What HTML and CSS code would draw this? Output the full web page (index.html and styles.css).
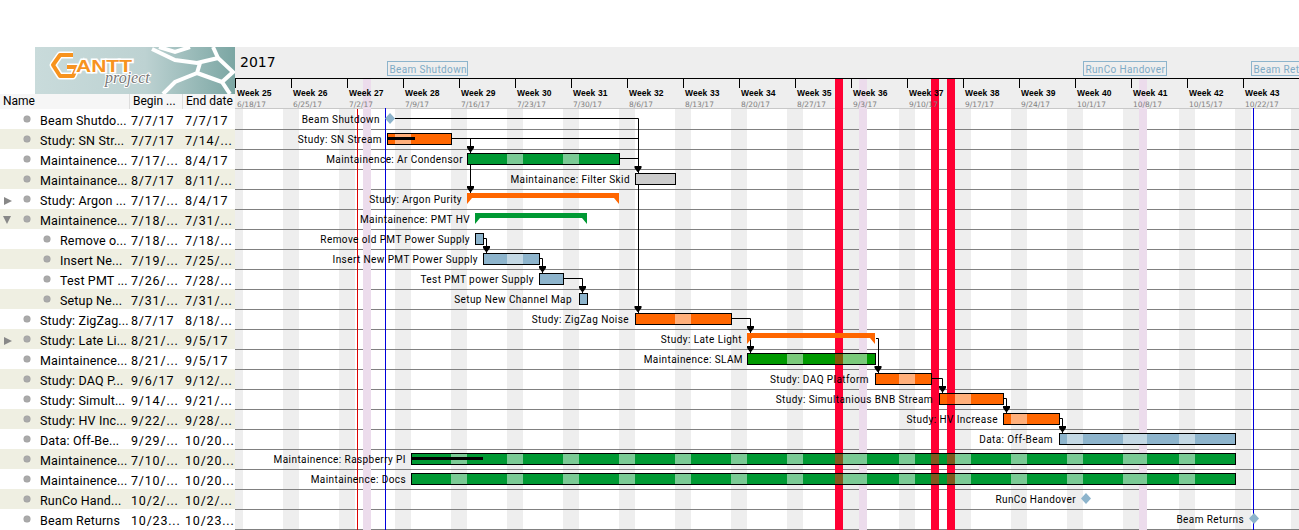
FILE: index.html
```html
<!DOCTYPE html>
<html lang="en">
<head>
    <meta charset="UTF-8">
    <title>GanttProject</title>
    <link rel="stylesheet" href="styles.css">
</head>
<body>
<div class="app">
    <div class="side">
        <div class="logo-wrap">
            <svg class="logo" viewBox="0 0 200 47" width="200" height="47" role="img" aria-label="Gantt project">
                <defs>
                    <linearGradient id="logoBg" x1="0" x2="1" y1="0" y2="0">
                        <stop offset="0" stop-color="#c9dbdb"/>
                        <stop offset="0.55" stop-color="#bdd2d2"/>
                        <stop offset="1" stop-color="#7ba6a3"/>
                    </linearGradient>
                </defs>
                <rect width="200" height="47" fill="url(#logoBg)"/>
                <g class="logo-cells">
                    <polyline points="117,2 140,13 162,16 183,11 178,0"/>
                    <polyline points="128,47 140,35 162,26 165,16"/>
                    <polyline points="162,26 187,35 195,47"/>
                    <polyline points="183,11 198,25 187,35"/>
                    <polyline points="124,0 140,5 155,0"/>
                </g>
                <polyline class="logo-g-edge" points="38,8 25,8 18,18 25,29 38,29 42,20 32,20"/>
                <polyline class="logo-g" points="38,8 25,8 18,18 25,29 38,29 42,20 32,20"/>
                <text class="logo-antt" x="41" y="25" textLength="56" lengthAdjust="spacingAndGlyphs">ANTT</text>
                <text class="logo-project" x="70" y="36">project</text>
            </svg>
        </div>
        <div class="thead">
            <div class="th th-name">Name</div>
            <div class="th th-begin">Begin ...</div>
            <div class="th th-end">End date</div>
        </div>
        <div class="tbody">
            <div class="row"><div class="name"><i class="toggle"></i><i class="dot"></i>Beam Shutdo...</div><div class="begin">7/7/17</div><div class="end">7/7/17</div></div>
            <div class="row"><div class="name"><i class="toggle"></i><i class="dot"></i>Study: SN Str...</div><div class="begin">7/7/17</div><div class="end">7/14/...</div></div>
            <div class="row"><div class="name"><i class="toggle"></i><i class="dot"></i>Maintainence...</div><div class="begin">7/17/...</div><div class="end">8/4/17</div></div>
            <div class="row"><div class="name"><i class="toggle"></i><i class="dot"></i>Maintainance...</div><div class="begin">8/7/17</div><div class="end">8/11/...</div></div>
            <div class="row"><div class="name"><i class="toggle closed"></i><i class="dot"></i>Study: Argon ...</div><div class="begin">7/17/...</div><div class="end">8/4/17</div></div>
            <div class="row"><div class="name"><i class="toggle open"></i><i class="dot"></i>Maintainence...</div><div class="begin">7/18/...</div><div class="end">7/31/...</div></div>
            <div class="row"><div class="name sub"><i class="toggle"></i><i class="dot"></i>Remove o...</div><div class="begin">7/18/...</div><div class="end">7/18/...</div></div>
            <div class="row"><div class="name sub"><i class="toggle"></i><i class="dot"></i>Insert Ne...</div><div class="begin">7/19/...</div><div class="end">7/25/...</div></div>
            <div class="row"><div class="name sub"><i class="toggle"></i><i class="dot"></i>Test PMT ...</div><div class="begin">7/26/...</div><div class="end">7/28/...</div></div>
            <div class="row"><div class="name sub"><i class="toggle"></i><i class="dot"></i>Setup Ne...</div><div class="begin">7/31/...</div><div class="end">7/31/...</div></div>
            <div class="row"><div class="name"><i class="toggle"></i><i class="dot"></i>Study: ZigZag...</div><div class="begin">8/7/17</div><div class="end">8/18/...</div></div>
            <div class="row"><div class="name"><i class="toggle closed"></i><i class="dot"></i>Study: Late Li...</div><div class="begin">8/21/...</div><div class="end">9/5/17</div></div>
            <div class="row"><div class="name"><i class="toggle"></i><i class="dot"></i>Maintainence...</div><div class="begin">8/21/...</div><div class="end">9/5/17</div></div>
            <div class="row"><div class="name"><i class="toggle"></i><i class="dot"></i>Study: DAQ P...</div><div class="begin">9/6/17</div><div class="end">9/12/...</div></div>
            <div class="row"><div class="name"><i class="toggle"></i><i class="dot"></i>Study: Simult...</div><div class="begin">9/14/...</div><div class="end">9/21/...</div></div>
            <div class="row"><div class="name"><i class="toggle"></i><i class="dot"></i>Study: HV Inc...</div><div class="begin">9/22/...</div><div class="end">9/28/...</div></div>
            <div class="row"><div class="name"><i class="toggle"></i><i class="dot"></i>Data: Off-Be...</div><div class="begin">9/29/...</div><div class="end">10/20...</div></div>
            <div class="row"><div class="name"><i class="toggle"></i><i class="dot"></i>Maintainence...</div><div class="begin">7/10/...</div><div class="end">10/20...</div></div>
            <div class="row"><div class="name"><i class="toggle"></i><i class="dot"></i>Maintainence...</div><div class="begin">7/10/...</div><div class="end">10/20...</div></div>
            <div class="row"><div class="name"><i class="toggle"></i><i class="dot"></i>RunCo Hand...</div><div class="begin">10/2/...</div><div class="end">10/2/...</div></div>
            <div class="row"><div class="name"><i class="toggle"></i><i class="dot"></i>Beam Returns</div><div class="begin">10/23...</div><div class="end">10/23...</div></div>
        </div>
    </div>

    <!-- chart uses page coordinates, see viewBox -->
    <svg class="chart" viewBox="235 47 1064 483" width="1064" height="483">
        <defs>
            <pattern id="rowLines" x="0" y="129" width="20" height="20" patternUnits="userSpaceOnUse">
                <rect width="20" height="1" class="row-line"/>
            </pattern>
            <g id="weekends">
                <rect x="227" y="109" width="16" height="421"/>
                <rect x="283" y="109" width="16" height="421"/>
                <rect x="339" y="109" width="16" height="421"/>
                <rect x="395" y="109" width="16" height="421"/>
                <rect x="451" y="109" width="16" height="421"/>
                <rect x="507" y="109" width="16" height="421"/>
                <rect x="563" y="109" width="16" height="421"/>
                <rect x="619" y="109" width="16" height="421"/>
                <rect x="675" y="109" width="16" height="421"/>
                <rect x="731" y="109" width="16" height="421"/>
                <rect x="787" y="109" width="16" height="421"/>
                <rect x="843" y="109" width="16" height="421"/>
                <rect x="899" y="109" width="16" height="421"/>
                <rect x="955" y="109" width="16" height="421"/>
                <rect x="1011" y="109" width="16" height="421"/>
                <rect x="1067" y="109" width="16" height="421"/>
                <rect x="1123" y="109" width="16" height="421"/>
                <rect x="1179" y="109" width="16" height="421"/>
                <rect x="1235" y="109" width="16" height="421"/>
                <rect x="1291" y="109" width="16" height="421"/>
            </g>
            <g id="purpleDays">
                <rect x="363" y="79" width="8" height="451"/>
                <rect x="859" y="79" width="8" height="451"/>
                <rect x="1139" y="79" width="8" height="451"/>
            </g>
            <g id="redDays">
                <rect x="835" y="79" width="8" height="451"/>
                <rect x="931" y="79" width="8" height="451"/>
                <rect x="947" y="79" width="8" height="451"/>
            </g>
            <polygon id="arrow" points="-3.5,-3 3.5,-3 3.5,-1 0.5,3 -0.5,3 -3.5,-1"/>
            <clipPath id="barInner">
                <rect x="388" y="134" width="63" height="10"/>
                <rect x="468" y="154" width="151" height="10"/>
                <rect x="484" y="254" width="55" height="10"/>
                <rect x="636" y="314" width="95" height="10"/>
                <rect x="748" y="354" width="127" height="10"/>
                <rect x="876" y="374" width="55" height="10"/>
                <rect x="940" y="394" width="63" height="10"/>
                <rect x="1004" y="414" width="55" height="10"/>
                <rect x="1060" y="434" width="175" height="10"/>
                <rect x="412" y="454" width="823" height="10"/>
                <rect x="412" y="474" width="823" height="10"/>
            </clipPath>
        </defs>

        <rect x="235" y="47" width="1064" height="61" class="head-bg"/>
        <use href="#weekends" class="weekend"/>
        <rect x="235" y="129" width="1064" height="401" fill="url(#rowLines)"/>
        <rect x="235" y="108" width="1064" height="1" class="head-edge"/>
        <use href="#purpleDays" class="purple"/>
        <use href="#redDays" class="red"/>

        <rect x="357" y="109" width="1" height="421" class="today"/>
        <rect x="385" y="108" width="1" height="422" class="milestone-line"/>
        <rect x="1253" y="108" width="1" height="422" class="milestone-line"/>

        <!-- header -->
        <text x="240" y="67" class="year">2017</text>
        <g class="flag">
            <rect x="387.5" y="61.5" width="80" height="14"/>
            <rect x="1083.5" y="61.5" width="83" height="14"/>
            <rect x="1251.5" y="61.5" width="80" height="14"/>
        </g>
        <g class="flag-text">
            <text x="389.5" y="72.5">Beam Shutdown</text>
            <text x="1085.5" y="72.5">RunCo Handover</text>
            <text x="1253.5" y="72.5">Beam Ret</text>
        </g>
        <rect x="235" y="78" width="1064" height="1" class="black"/>
        <path class="ticks" d="M235.5 78V88M291.5 78V88M347.5 78V88M403.5 78V88M459.5 78V88M515.5 78V88M571.5 78V88M627.5 78V88M683.5 78V88M739.5 78V88M795.5 78V88M851.5 78V88M907.5 78V88M963.5 78V88M1019.5 78V88M1075.5 78V88M1131.5 78V88M1187.5 78V88M1243.5 78V88"/>
        <g class="week">
            <text x="237" y="96">Week 25</text>
            <text x="293" y="96">Week 26</text>
            <text x="349" y="96">Week 27</text>
            <text x="405" y="96">Week 28</text>
            <text x="461" y="96">Week 29</text>
            <text x="517" y="96">Week 30</text>
            <text x="573" y="96">Week 31</text>
            <text x="629" y="96">Week 32</text>
            <text x="685" y="96">Week 33</text>
            <text x="741" y="96">Week 34</text>
            <text x="797" y="96">Week 35</text>
            <text x="853" y="96">Week 36</text>
            <text x="909" y="96">Week 37</text>
            <text x="965" y="96">Week 38</text>
            <text x="1021" y="96">Week 39</text>
            <text x="1077" y="96">Week 40</text>
            <text x="1133" y="96">Week 41</text>
            <text x="1189" y="96">Week 42</text>
            <text x="1245" y="96">Week 43</text>
        </g>
        <g class="week-date">
            <text x="237" y="107">6/18/17</text>
            <text x="293" y="107">6/25/17</text>
            <text x="349" y="107">7/2/17</text>
            <text x="405" y="107">7/9/17</text>
            <text x="461" y="107">7/16/17</text>
            <text x="517" y="107">7/23/17</text>
            <text x="573" y="107">7/30/17</text>
            <text x="629" y="107">8/6/17</text>
            <text x="685" y="107">8/13/17</text>
            <text x="741" y="107">8/20/17</text>
            <text x="797" y="107">8/27/17</text>
            <text x="853" y="107">9/3/17</text>
            <text x="909" y="107">9/10/17</text>
            <text x="965" y="107">9/17/17</text>
            <text x="1021" y="107">9/24/17</text>
            <text x="1077" y="107">10/1/17</text>
            <text x="1133" y="107">10/8/17</text>
            <text x="1189" y="107">10/15/17</text>
            <text x="1245" y="107">10/22/17</text>
        </g>

        <!-- task labels -->
        <g class="label">
            <text x="380" y="123">Beam Shutdown</text>
            <text x="382" y="143">Study: SN Stream</text>
            <text x="463" y="163">Maintainence: Ar Condensor</text>
            <text x="630" y="183">Maintainance: Filter Skid</text>
            <text x="462" y="203">Study: Argon Purity</text>
            <text x="470" y="223">Maintainence: PMT HV</text>
            <text x="470" y="243">Remove old PMT Power Supply</text>
            <text x="478" y="263">Insert New PMT Power Supply</text>
            <text x="534" y="283">Test PMT power Supply</text>
            <text x="572" y="303">Setup New Channel Map</text>
            <text x="629" y="323">Study: ZigZag Noise</text>
            <text x="742" y="343">Study: Late Light</text>
            <text x="743" y="363">Maintainence: SLAM</text>
            <text x="869" y="383">Study: DAQ Platform</text>
            <text x="933" y="403">Study: Simultanious BNB Stream</text>
            <text x="998" y="423">Study: HV Increase</text>
            <text x="1053" y="443">Data: Off-Beam</text>
            <text x="406" y="463">Maintainence: Raspberry PI</text>
            <text x="406" y="483">Maintainence: Docs</text>
            <text x="1076" y="503">RunCo Handover</text>
            <text x="1244" y="523">Beam Returns</text>
        </g>

        <!-- dependencies -->
        <path class="dep" d="M395 118.5H638.5V313M452 138.5H638.5M470.5 138.5V193M620 158.5H638.5M484 238.5H486.5V253M540 258.5H542.5V273M564 278.5H582.5V293M732 318.5H750.5V353M876 338.5H878.5V373M932 378.5H942.5V393M1004 398.5H1006.5V413M1060 418.5H1062.5V433"/>

        <!-- tasks -->
        <g class="bar orange">
            <rect x="387.5" y="133.5" width="64" height="11"/>
            <rect x="635.5" y="313.5" width="96" height="11"/>
            <rect x="875.5" y="373.5" width="56" height="11"/>
            <rect x="939.5" y="393.5" width="64" height="11"/>
            <rect x="1003.5" y="413.5" width="56" height="11"/>
        </g>
        <g class="bar green">
            <rect x="467.5" y="153.5" width="152" height="11"/>
            <rect x="411.5" y="453.5" width="824" height="11"/>
            <rect x="411.5" y="473.5" width="824" height="11"/>
        </g>
        <rect x="747.5" y="353.5" width="128" height="11" class="bar slam"/>
        <rect x="635.5" y="173.5" width="40" height="11" class="bar grey"/>
        <g class="bar blue">
            <rect x="475.5" y="233.5" width="8" height="11"/>
            <rect x="483.5" y="253.5" width="56" height="11"/>
            <rect x="539.5" y="273.5" width="24" height="11"/>
            <rect x="579.5" y="293.5" width="8" height="11"/>
            <rect x="1059.5" y="433.5" width="176" height="11"/>
        </g>

        <!-- days off showing through the bars -->
        <g clip-path="url(#barInner)">
            <use href="#weekends" class="bar-weekend"/>
            <use href="#purpleDays" class="bar-weekend"/>
            <use href="#redDays" class="bar-red"/>
        </g>

        <!-- summary tasks -->
        <polygon class="orange-fill" points="467,193 619,193 619,204 614,198 472,198 467,204"/>
        <polygon class="green-fill" points="475,213 587,213 587,224 582,218 480,218 475,224"/>
        <polygon class="orange-fill" points="747,333 875,333 875,344 870,338 752,338 747,344"/>

        <!-- progress -->
        <rect x="388" y="137" width="27" height="3" class="black"/>
        <rect x="412" y="457" width="71" height="3" class="black"/>

        <!-- arrow heads -->
        <g class="black">
            <use href="#arrow" x="470.5" y="149"/>
            <use href="#arrow" x="470.5" y="189"/>
            <use href="#arrow" x="638" y="169"/>
            <use href="#arrow" x="638" y="309"/>
            <use href="#arrow" x="486.5" y="249"/>
            <use href="#arrow" x="542.5" y="269"/>
            <use href="#arrow" x="582.5" y="289"/>
            <use href="#arrow" x="750.5" y="329"/>
            <use href="#arrow" x="750.5" y="349"/>
            <use href="#arrow" x="878" y="369"/>
            <use href="#arrow" x="942.5" y="389"/>
            <use href="#arrow" x="1006.5" y="409"/>
            <use href="#arrow" x="1062.5" y="429"/>
        </g>

        <!-- milestones -->
        <g class="diamond">
            <polygon points="390,113 395,118.5 390,124 385,118.5"/>
            <polygon points="1086,493 1091,498.5 1086,504 1081,498.5"/>
            <polygon points="1254,513 1259,518.5 1254,524 1249,518.5"/>
        </g>
    </svg>
</div>
</body>
</html>
```
FILE: styles.css
```css
html, body {
    margin: 0;
    padding: 0;
    background: #fff;
    overflow: hidden;
}

.app {
    display: flex;
    width: 1299px;
    height: 530px;
    padding-top: 47px;
    box-sizing: border-box;
    font-family: Roboto, sans-serif;
    color: #000;
}

/* left task table */
.side {
    width: 235px;
    flex: none;
}

.logo-wrap {
    height: 47px;
    padding-left: 35px;
}

.logo {
    display: block;
}

.logo-cells polyline {
    fill: none;
    stroke: #fff;
    stroke-width: 4;
}

.logo-g, .logo-g-edge {
    fill: none;
    stroke-linejoin: round;
}

.logo-g {
    stroke: #f7931e;
    stroke-width: 4;
}

.logo-g-edge {
    stroke: #fff;
    stroke-width: 7;
}

.logo-antt {
    font-family: "Liberation Sans", sans-serif;
    font-weight: 700;
    font-size: 17px;
    fill: #f7931e;
    stroke: #fff;
    stroke-width: 3;
    paint-order: stroke;
}

.logo-project {
    font-family: "Liberation Serif", serif;
    font-style: italic;
    font-size: 16px;
    fill: #777;
    stroke: #fff;
    stroke-width: 2;
    paint-order: stroke;
}

.thead {
    display: flex;
    height: 15px;
    background: #f6f6f6;
    font-size: 12px;
    line-height: 15px;
}

.th {
    box-sizing: border-box;
    white-space: nowrap;
    overflow: hidden;
}

.th-name {
    width: 129px;
    padding-left: 3px;
}

.th-begin {
    width: 53px;
    padding-left: 3px;
    border-left: 1px solid #ddd;
}

.th-end {
    width: 53px;
    padding-left: 3px;
    border-left: 1px solid #ddd;
}

.row {
    display: flex;
    box-sizing: border-box;
    height: 20px;
    padding-top: 2px;
    font-size: 12.5px;
    line-height: 20px;
    white-space: nowrap;
}

.row:nth-child(even) {
    background: #efefe2;
}

.name {
    display: flex;
    align-items: flex-start;
    box-sizing: border-box;
    width: 131px;
    height: 18px;
    padding-left: 3px;
    letter-spacing: 0.15px;
}

.name.sub {
    padding-left: 23px;
}

.begin {
    width: 54px;
    letter-spacing: 0.8px;
}

.end {
    width: 50px;
    letter-spacing: 0.8px;
}

.toggle {
    flex: none;
    width: 21px;
    height: 9px;
    margin-top: 5px;
    box-sizing: border-box;
}

.toggle.closed {
    border-left: 8px solid #888;
    border-top: 4px solid transparent;
    border-bottom: 4px solid transparent;
    height: 8px;
    margin-left: 1px;
    margin-top: 6px;
    width: 20px;
}

.toggle.open::before {
    content: "";
    display: block;
    width: 0;
    border-top: 8px solid #888;
    border-left: 4.5px solid transparent;
    border-right: 4.5px solid transparent;
}

.dot {
    flex: none;
    width: 6px;
    height: 6px;
    margin: 5px 10px 0 0;
    border-radius: 50%;
    background: #aaa;
    box-shadow: 0 0 0 0.5px #999;
}

/* chart */
.chart {
    display: block;
    flex: none;
    font-family: Roboto, sans-serif;
}

.head-bg {
    fill: #eee;
}

.head-edge {
    fill: #c8c8c8;
}

.weekend {
    fill: #eee;
}

.row-line {
    fill: #808080;
}

.purple {
    fill: #ecdcec;
}

.red {
    fill: #ff0033;
}

.today {
    fill: #dd0000;
}

.milestone-line {
    fill: #0000dd;
}

.black {
    fill: #000;
}

.year {
    font-family: "DejaVu Sans", sans-serif;
    font-size: 14px;
}

.flag rect {
    fill: none;
    stroke: #8db4cc;
    stroke-width: 1;
}

.flag-text {
    font-size: 10px;
    letter-spacing: 0.35px;
    fill: #7fabc6;
}

.ticks {
    stroke: #000;
    stroke-width: 1;
    fill: none;
}

.week {
    font-family: "Liberation Sans", sans-serif;
    font-size: 8.5px;
    font-weight: 700;
    letter-spacing: 0.1px;
}

.week-date {
    font-family: "DejaVu Sans", sans-serif;
    font-size: 7.5px;
    fill: #808080;
}

.label text {
    font-size: 10px;
    letter-spacing: 0.42px;
    text-anchor: end;
}

.dep {
    fill: none;
    stroke: #000;
    stroke-width: 1;
}

.bar rect, rect.bar {
    stroke: #000;
    stroke-width: 1;
}

.orange, .orange-fill {
    fill: #ff6600;
}

.green, .green-fill {
    fill: #009933;
}

.slam {
    fill: #009900;
}

.grey {
    fill: #ccc;
}

.blue, .diamond {
    fill: #8db4cc;
}

.bar-weekend {
    fill: #fff;
    fill-opacity: 0.48;
}

.bar-red {
    fill: #ff190a;
    fill-opacity: 0.5;
}
```
